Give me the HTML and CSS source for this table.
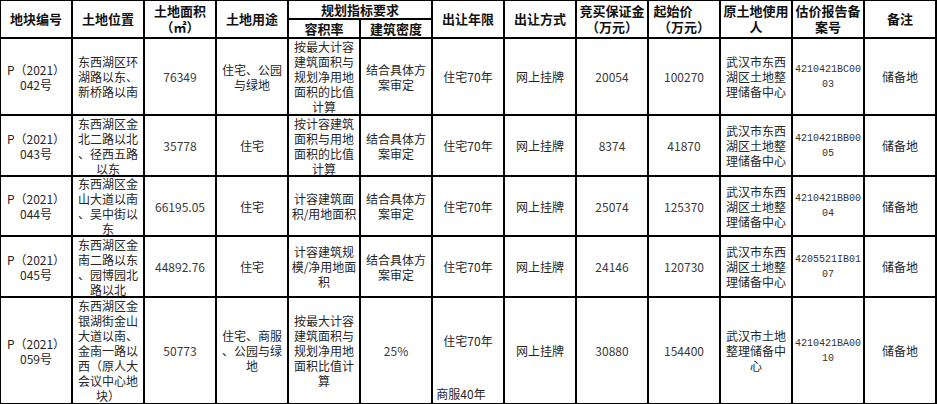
FILE: index.html
```html
<!DOCTYPE html>
<html lang="zh-CN">
<head>
<meta charset="utf-8">
<title>土地出让</title>
<link rel="stylesheet" href="styles.css">
</head>
<body>
<table class="grid">
<thead>
<tr>
<th rowspan="2"><div class="c hh">地块编号</div></th>
<th rowspan="2"><div class="c hh">土地位置</div></th>
<th rowspan="2"><div class="c hh">土地面积<br>（㎡）</div></th>
<th rowspan="2"><div class="c hh">土地用途</div></th>
<th colspan="2"><div class="c h1 wide">规划指标要求</div></th>
<th rowspan="2"><div class="c hh">出让年限</div></th>
<th rowspan="2"><div class="c hh">出让方式</div></th>
<th rowspan="2"><div class="c hh">竞买保证金<br>（万元）</div></th>
<th rowspan="2"><div class="c hh"><span class="qs">起始价</span>（万元）</div></th>
<th rowspan="2"><div class="c hh">原土地使用人</div></th>
<th rowspan="2"><div class="c hh">估价报告备案号</div></th>
<th rowspan="2"><div class="c hh">备注</div></th>
</tr>
<tr>
<th><div class="c h2">容积率</div></th>
<th><div class="c h2">建筑密度</div></th>
</tr>
</thead>
<tbody>
<tr class="r1">
<td><div class="c">P（2021）<br>042号</div></td>
<td><div class="c">东西湖区环湖路以东、新桥路以南</div></td>
<td><div class="c num">76349</div></td>
<td><div class="c">住宅、公园与绿地</div></td>
<td><div class="c">按最大计容建筑面积与规划净用地面积的比值计算</div></td>
<td><div class="c">结合具体方案审定</div></td>
<td><div class="c">住宅70年</div></td>
<td><div class="c">网上挂牌</div></td>
<td><div class="c num">20054</div></td>
<td><div class="c num">100270</div></td>
<td><div class="c">武汉市东西湖区土地整理储备中心</div></td>
<td><div class="c code">4210421BC0003</div></td>
<td><div class="c">储备地</div></td>
</tr>
<tr class="r2">
<td><div class="c">P（2021）<br>043号</div></td>
<td><div class="c">东西湖区金北二路以北、径西五路以东</div></td>
<td><div class="c num">35778</div></td>
<td><div class="c">住宅</div></td>
<td><div class="c">按计容建筑面积与用地面积的比值计算</div></td>
<td><div class="c">结合具体方案审定</div></td>
<td><div class="c">住宅70年</div></td>
<td><div class="c">网上挂牌</div></td>
<td><div class="c num">8374</div></td>
<td><div class="c num">41870</div></td>
<td><div class="c">武汉市东西湖区土地整理储备中心</div></td>
<td><div class="c code">4210421BB0005</div></td>
<td><div class="c">储备地</div></td>
</tr>
<tr class="r3">
<td><div class="c">P（2021）<br>044号</div></td>
<td><div class="c">东西湖区金山大道以南、吴中街以东</div></td>
<td><div class="c num">66195.05</div></td>
<td><div class="c">住宅</div></td>
<td><div class="c">计容建筑面积/用地面积</div></td>
<td><div class="c">结合具体方案审定</div></td>
<td><div class="c">住宅70年</div></td>
<td><div class="c">网上挂牌</div></td>
<td><div class="c num">25074</div></td>
<td><div class="c num">125370</div></td>
<td><div class="c">武汉市东西湖区土地整理储备中心</div></td>
<td><div class="c code">4210421BB0004</div></td>
<td><div class="c">储备地</div></td>
</tr>
<tr class="r4">
<td><div class="c">P（2021）<br>045号</div></td>
<td><div class="c">东西湖区金南二路以东、园博园北路以北</div></td>
<td><div class="c num">44892.76</div></td>
<td><div class="c">住宅</div></td>
<td><div class="c">计容建筑规模/净用地面积</div></td>
<td><div class="c">结合具体方案审定</div></td>
<td><div class="c">住宅70年</div></td>
<td><div class="c">网上挂牌</div></td>
<td><div class="c num">24146</div></td>
<td><div class="c num">120730</div></td>
<td><div class="c">武汉市东西湖区土地整理储备中心</div></td>
<td><div class="c code">4205521IB0107</div></td>
<td><div class="c">储备地</div></td>
</tr>
<tr class="r5">
<td><div class="c">P（2021）<br>059号</div></td>
<td><div class="c">东西湖区金银湖街金山大道以南、金南一路以西（原人大会议中心地块）</div></td>
<td><div class="c num">50773</div></td>
<td><div class="c">住宅、商服、公园与绿地</div></td>
<td><div class="c">按最大计容建筑面积与规划净用地面积比值计算</div></td>
<td><div class="c num">25%</div></td>
<td><div class="c top"><span class="y1">住宅70年</span><span class="y2">商服40年</span></div></td>
<td><div class="c">网上挂牌</div></td>
<td><div class="c num">30880</div></td>
<td><div class="c num">154400</div></td>
<td><div class="c">武汉市土地整理储备中心</div></td>
<td><div class="c code">4210421BA0010</div></td>
<td><div class="c">储备地</div></td>
</tr>
</tbody>
</table>
</body>
</html>
```
FILE: styles.css
```css
html, body {
  margin: 0;
  padding: 0;
  background: #fff;
}
body {
  font-family: "Noto Sans CJK SC", sans-serif;
  font-size: 12px;
  color: #262626;
  overflow: hidden;
}
.grid {
  border-collapse: collapse;
  margin: -1px 0 0 -1px;
}
.grid th,
.grid td {
  border: 2px solid #000;
  padding: 0;
  vertical-align: middle;
}
.c {
  box-sizing: border-box;
  width: 70px;
  padding: 0 2px;
  display: flex;
  flex-direction: column;
  justify-content: center;
  align-items: center;
  text-align: center;
  overflow: hidden;
  line-height: 15px;
  word-break: break-all;
  line-break: anywhere;
}
th .c {
  font-weight: bold;
  font-size: 13px;
  line-height: 16px;
  color: #111;
  padding: 0 1px;
}
.hh { height: 36px; }
.h1 { height: 17px; }
.h2 { height: 17px; }
.wide { width: 142px; }
.qs {
  display: block;
  padding-right: 22px;
}
.num {
  color: #3a3a3a;
}
.code {
  padding: 0;
  font-family: "Liberation Mono", monospace;
  font-size: 10px;
  line-height: 15px;
  color: #333;
}
.r1 .c { height: 75px; }
.r2 .c { height: 59px; }
.r3 .c { height: 58px; }
.r4 .c { height: 59px; }
.r5 .c { height: 105px; }
.r5 .top {
  justify-content: flex-start;
  padding-top: 35px;
}
.y1 { display: block; }
.y2 {
  display: block;
  margin-top: 38px;
  margin-right: 14px;
}
```
